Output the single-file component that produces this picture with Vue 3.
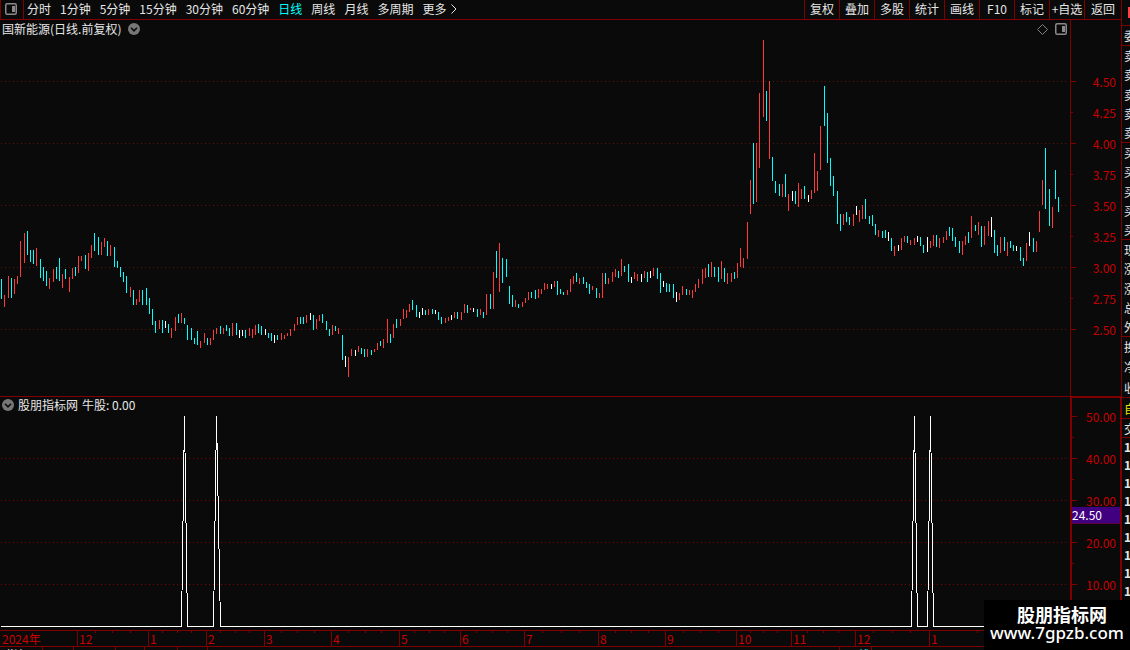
<template>
  <div class="terminal">
    <div class="main">
      <nav class="toolbar">
        <button class="layout-btn" aria-label="布局">
          <svg width="12" height="12" viewBox="0 0 12 12">
            <rect x="0.75" y="0.75" width="10.5" height="10.5" rx="1.5" fill="none" stroke="#8a8a8a" stroke-width="1.5" />
            <rect x="7" y="3" width="3" height="6" fill="#8a8a8a" />
          </svg>
        </button>
        <div class="periods">
          <button
            v-for="p in periods"
            :key="p"
            :class="{ active: p === current }"
            @click="current = p"
          >{{ p }}</button>
          <svg class="more" width="6" height="10" viewBox="0 0 6 10">
            <path d="M0.5 0.5 L5 5 L0.5 9.5" fill="none" stroke="#e6e6e6" />
          </svg>
        </div>
        <div class="actions">
          <button v-for="a in actions" :key="a">{{ a }}</button>
        </div>
      </nav>

      <section class="panel price">
        <div class="plot">
          <svg class="canvas" viewBox="0 20 1070 376" preserveAspectRatio="none" shape-rendering="crispEdges">
            <line v-for="y in priceGrid" :key="y" class="grid" x1="1" x2="1068" :y1="y + 0.5" :y2="y + 0.5" />
            <rect
              v-for="b in bars"
              :key="b[0]"
              :class="b[3]"
              :x="b[0]"
              :y="b[1]"
              width="1"
              :height="b[2] - b[1]"
            />
          </svg>
          <div class="head">
            <span>国新能源(日线.前复权)</span>
            <svg class="fold" width="12" height="12" viewBox="0 0 12 12">
              <circle cx="6" cy="6" r="6" fill="#777" />
              <path d="M3 4.8 L6 7.8 L9 4.8" fill="none" stroke="#0a0a0a" stroke-width="1.6" />
            </svg>
            <svg class="diamond" width="11" height="11" viewBox="0 0 11 11">
              <path d="M5.5 0.5 L10.5 5.5 L5.5 10.5 L0.5 5.5 Z" fill="none" stroke="#808080" />
            </svg>
            <svg width="12" height="12" viewBox="0 0 12 12">
              <rect x="0.75" y="0.75" width="10.5" height="10.5" rx="1.5" fill="none" stroke="#8a8a8a" stroke-width="1.5" />
              <rect x="7" y="3" width="3" height="6" fill="#8a8a8a" />
            </svg>
          </div>
        </div>
        <div class="axis">
          <div v-for="(t, i) in priceTicks" :key="t" class="tick" :class="{ minor: i % 2 }"><span>{{ t }}</span></div>
        </div>
      </section>

      <section class="panel indicator">
        <div class="plot">
          <svg class="canvas" viewBox="0 397 1070 233" preserveAspectRatio="none" shape-rendering="crispEdges">
            <line v-for="y in indicatorGrid" :key="y" class="grid strong" x1="1" x2="1068" :y1="y + 0.5" :y2="y + 0.5" />
            <polyline class="signal" :points="signal" />
          </svg>
          <div class="head">
            <svg class="fold" width="12" height="12" viewBox="0 0 12 12">
              <circle cx="6" cy="6" r="6" fill="#777" />
              <path d="M3 4.8 L6 7.8 L9 4.8" fill="none" stroke="#0a0a0a" stroke-width="1.6" />
            </svg>
            <span>股朋指标网</span>
            <span>牛股: 0.00</span>
          </div>
        </div>
        <div class="axis">
          <div v-for="(t, i) in indicatorTicks" :key="i" class="tick" :class="{ minor: i % 2 }"><span>{{ t }}</span></div>
          <div class="cursor">24.50</div>
        </div>
      </section>

      <div class="dates">
        <span v-for="(m, i) in months" :key="i" :style="{ flexGrow: m[1] }">{{ m[0] }}</span>
      </div>
      <div class="tabs">
        <button v-for="(t, i) in tabs" :key="i" :style="{ flexGrow: t[1] }" :class="{ active: t[0] === '日线' }">{{ t[0] }}</button>
      </div>
    </div>

    <aside class="quote">
      <div class="flag"><i></i></div>
      <div v-for="(g, i) in quoteGroups" :key="i" class="group" :class="g.kind" :style="{ flexGrow: g.size }">
        <span v-for="(c, k) in g.rows" :key="k">{{ c }}</span>
      </div>
    </aside>

    <div class="brand">
      <strong>股朋指标网</strong>
      <span>www.7gpzb.com</span>
    </div>
  </div>
</template>

<script setup>
import { ref } from 'vue'

const periods = ['分时', '1分钟', '5分钟', '15分钟', '30分钟', '60分钟', '日线', '周线', '月线', '多周期', '更多']
const actions = ['复权', '叠加', '多股', '统计', '画线', 'F10', '标记', '+自选', '返回']
const current = ref('日线')

const priceTicks = ['4.50', '4.25', '4.00', '3.75', '3.50', '3.25', '3.00', '2.75', '2.50']
const priceGrid = [81, 143, 205, 267, 329]
const indicatorTicks = ['50.00', '', '40.00', '', '30.00', '', '20.00', '', '10.00']
const indicatorGrid = [458, 500, 542, 584]

// label and width share of each month
const months = [
  ['2024年', 77], ['12', 71], ['1', 58], ['2', 58], ['3', 67], ['4', 68], ['5', 61], ['6', 64],
  ['7', 74], ['8', 67], ['9', 71], ['10', 55], ['11', 64], ['12', 74], ['1', 192]
]
const tabs = [
  ['指标', 43], ['', 31], ['', 42], ['', 29], ['', 33], ['', 30], ['', 632], ['日线', 32], ['', 249]
]

const quoteGroups = [
  { size: 20, rows: ['委'] },
  { size: 97, rows: ['卖', '卖', '卖', '卖', '卖'] },
  { size: 97, rows: ['买', '买', '买', '买', '买'] },
  { size: 97, rows: ['现', '涨', '涨', '总', '外'] },
  { size: 61, rows: ['换', '净', '收'] },
  { size: 21, rows: ['自'], kind: 'own' },
  { size: 19, rows: ['交'] },
  { size: 162, rows: ['1', '1', '1', '1', '1', '1', '1', '1', '1'], kind: 'trades' },
  { size: 50, rows: [], kind: 'rest' }
]

// [left foot, peak, right foot] of each signal
const peaks = [[181, 184, 187], [213, 216, 220], [911, 914, 917], [927, 930, 933]]
const signal = [
  '1,626.5',
  ...peaks.map(([a, b, c]) => `${a + 0.5},626.5 ${b + 0.5},416 ${c + 0.5},626.5`),
  '1059,626.5'
].join(' ')

// x, high, low, colour
const bars = [
  [1, 279, 299, 'c'], [4, 295, 307, 'r'], [8, 276, 298, 'r'], [11, 278, 298, 'c'], [14, 279, 294, 'r'],
  [17, 276, 284, 'r'], [20, 241, 277, 'r'], [24, 233, 263, 'r'], [27, 231, 255, 'c'], [30, 250, 262, 'c'],
  [33, 250, 264, 'c'], [36, 248, 266, 'r'], [40, 259, 278, 'c'], [43, 267, 281, 'c'], [46, 271, 286, 'c'],
  [49, 278, 289, 'r'], [53, 269, 282, 'r'], [56, 267, 279, 'c'], [59, 258, 281, 'c'], [62, 274, 288, 'r'],
  [65, 269, 279, 'c'], [69, 277, 292, 'r'], [72, 268, 279, 'r'], [75, 267, 276, 'c'], [78, 256, 273, 'r'],
  [81, 256, 261, 'r'], [85, 255, 269, 'c'], [88, 253, 271, 'r'], [91, 245, 258, 'r'], [94, 233, 251, 'c'],
  [98, 237, 255, 'c'], [101, 242, 255, 'r'], [104, 238, 247, 'r'], [107, 241, 256, 'c'], [110, 245, 256, 'r'],
  [114, 247, 267, 'c'], [117, 261, 268, 'c'], [120, 267, 277, 'c'], [123, 272, 282, 'c'], [126, 276, 293, 'c'],
  [130, 287, 297, 'r'], [133, 290, 305, 'c'], [136, 299, 305, 'r'], [139, 290, 302, 'r'], [142, 290, 305, 'c'],
  [146, 288, 305, 'c'], [149, 298, 314, 'c'], [152, 309, 325, 'c'], [155, 321, 333, 'c'], [159, 320, 329, 'r'],
  [162, 320, 333, 'c'], [165, 321, 328, 'w'], [168, 324, 333, 'c'], [171, 328, 338, 'r'], [175, 317, 331, 'r'],
  [178, 314, 323, 'c'], [181, 313, 323, 'r'], [184, 318, 324, 'c'], [187, 325, 340, 'c'], [191, 328, 340, 'c'],
  [194, 338, 344, 'c'], [197, 331, 345, 'c'], [200, 341, 348, 'r'], [204, 333, 343, 'r'], [207, 338, 345, 'c'],
  [210, 338, 345, 'r'], [213, 330, 340, 'r'], [216, 328, 334, 'r'], [220, 326, 334, 'c'], [223, 328, 334, 'r'],
  [226, 325, 331, 'c'], [229, 328, 336, 'c'], [232, 323, 336, 'r'], [236, 323, 335, 'c'], [239, 330, 338, 'w'],
  [242, 330, 336, 'w'], [245, 330, 338, 'c'], [249, 328, 336, 'r'], [252, 329, 338, 'r'], [255, 325, 335, 'r'],
  [258, 324, 333, 'c'], [261, 326, 335, 'c'], [265, 329, 335, 'w'], [268, 333, 338, 'c'], [271, 333, 341, 'c'],
  [274, 335, 343, 'w'], [277, 335, 340, 'c'], [281, 333, 340, 'r'], [284, 335, 339, 'r'], [287, 333, 336, 'r'],
  [290, 329, 336, 'r'], [294, 324, 331, 'r'], [297, 317, 325, 'r'], [300, 317, 324, 'c'], [303, 317, 324, 'c'],
  [306, 315, 323, 'r'], [310, 313, 320, 'w'], [313, 315, 330, 'c'], [316, 319, 329, 'r'], [319, 315, 321, 'r'],
  [322, 314, 323, 'c'], [326, 321, 330, 'c'], [329, 329, 336, 'c'], [332, 325, 335, 'r'], [335, 326, 331, 'c'],
  [338, 328, 334, 'r'], [342, 335, 360, 'c'], [345, 356, 367, 'w'], [348, 357, 377, 'r'], [351, 349, 356, 'r'],
  [355, 350, 356, 'w'], [358, 346, 352, 'r'], [361, 348, 354, 'c'], [364, 349, 357, 'c'], [367, 349, 357, 'r'],
  [371, 350, 355, 'c'], [374, 349, 352, 'r'], [377, 343, 350, 'r'], [380, 341, 346, 'c'], [383, 339, 348, 'r'],
  [387, 319, 343, 'r'], [390, 334, 343, 'c'], [393, 324, 338, 'r'], [396, 319, 328, 'c'], [400, 319, 326, 'r'],
  [403, 309, 319, 'r'], [406, 310, 318, 'r'], [409, 304, 312, 'r'], [412, 300, 310, 'c'], [416, 305, 317, 'c'],
  [419, 312, 318, 'w'], [422, 308, 315, 'w'], [425, 310, 315, 'c'], [428, 309, 315, 'r'], [432, 309, 314, 'c'],
  [435, 310, 314, 'w'], [438, 312, 320, 'c'], [441, 317, 324, 'c'], [445, 318, 323, 'r'], [448, 317, 321, 'r'],
  [451, 315, 320, 'w'], [454, 312, 318, 'r'], [457, 312, 319, 'c'], [461, 312, 320, 'r'], [464, 304, 313, 'r'],
  [467, 305, 313, 'c'], [470, 308, 310, 'r'], [473, 308, 312, 'w'], [477, 309, 317, 'c'], [480, 309, 315, 'r'],
  [483, 312, 318, 'c'], [486, 294, 315, 'r'], [490, 294, 309, 'c'], [493, 272, 309, 'r'], [496, 251, 278, 'c'],
  [499, 243, 292, 'r'], [502, 258, 283, 'c'], [506, 259, 277, 'c'], [509, 286, 304, 'c'], [512, 295, 307, 'c'],
  [515, 300, 307, 'r'], [518, 304, 308, 'c'], [522, 302, 307, 'r'], [525, 298, 303, 'r'], [528, 292, 300, 'r'],
  [531, 292, 298, 'c'], [535, 290, 299, 'c'], [538, 289, 298, 'r'], [541, 289, 294, 'r'], [544, 283, 290, 'r'],
  [547, 284, 289, 'r'], [551, 284, 289, 'w'], [554, 281, 287, 'r'], [557, 281, 295, 'c'], [560, 289, 294, 'c'],
  [563, 292, 295, 'c'], [567, 290, 295, 'r'], [570, 279, 292, 'r'], [573, 276, 284, 'r'], [576, 273, 282, 'c'],
  [579, 278, 284, 'r'], [583, 277, 284, 'c'], [586, 282, 288, 'c'], [589, 284, 294, 'c'], [592, 286, 290, 'r'],
  [596, 288, 298, 'c'], [599, 293, 298, 'r'], [602, 273, 298, 'r'], [605, 273, 284, 'c'], [608, 278, 284, 'r'],
  [612, 272, 282, 'r'], [615, 269, 277, 'r'], [618, 271, 278, 'c'], [621, 259, 276, 'r'], [624, 266, 272, 'c'],
  [628, 264, 282, 'c'], [631, 277, 283, 'w'], [634, 272, 279, 'r'], [637, 274, 281, 'r'], [641, 274, 282, 'w'],
  [644, 271, 278, 'r'], [647, 272, 282, 'c'], [650, 271, 278, 'w'], [653, 268, 276, 'r'], [657, 268, 279, 'c'],
  [660, 273, 293, 'c'], [663, 281, 287, 'w'], [666, 283, 292, 'c'], [669, 284, 292, 'c'], [673, 284, 298, 'c'],
  [676, 292, 302, 'w'], [679, 293, 300, 'r'], [682, 286, 295, 'r'], [686, 289, 295, 'c'], [689, 290, 295, 'r'],
  [692, 290, 298, 'r'], [695, 284, 292, 'r'], [698, 279, 288, 'r'], [702, 269, 284, 'r'], [705, 268, 278, 'r'],
  [708, 264, 277, 'c'], [711, 262, 277, 'r'], [714, 267, 277, 'c'], [718, 267, 282, 'c'], [721, 261, 279, 'r'],
  [724, 268, 282, 'c'], [727, 273, 284, 'r'], [731, 273, 282, 'r'], [734, 272, 279, 'c'], [737, 263, 278, 'r'],
  [740, 248, 267, 'r'], [743, 258, 268, 'r'], [747, 222, 259, 'r'], [750, 180, 214, 'r'], [753, 143, 204, 'c'],
  [756, 143, 202, 'r'], [759, 93, 168, 'r'], [763, 40, 117, 'r'], [766, 91, 121, 'c'], [769, 81, 159, 'r'],
  [772, 157, 181, 'c'], [775, 181, 193, 'c'], [779, 184, 196, 'c'], [782, 184, 197, 'r'], [785, 174, 197, 'c'],
  [788, 194, 211, 'r'], [792, 191, 201, 'w'], [795, 191, 204, 'c'], [798, 183, 207, 'r'], [801, 189, 199, 'r'],
  [804, 186, 199, 'c'], [808, 195, 202, 'w'], [811, 190, 199, 'r'], [814, 153, 193, 'r'], [817, 171, 191, 'r'],
  [820, 126, 170, 'r'], [824, 86, 126, 'c'], [827, 113, 163, 'c'], [830, 158, 186, 'c'], [833, 176, 196, 'c'],
  [837, 191, 224, 'c'], [840, 214, 231, 'c'], [843, 214, 225, 'r'], [846, 212, 222, 'c'], [849, 217, 225, 'c'],
  [853, 214, 226, 'r'], [856, 206, 215, 'w'], [859, 210, 222, 'r'], [862, 205, 219, 'r'], [865, 199, 219, 'c'],
  [869, 216, 224, 'c'], [872, 215, 226, 'c'], [875, 224, 235, 'c'], [878, 230, 237, 'r'], [882, 231, 238, 'c'],
  [885, 230, 238, 'c'], [888, 232, 241, 'w'], [891, 238, 251, 'c'], [894, 246, 256, 'r'], [898, 245, 251, 'w'],
  [901, 238, 250, 'r'], [904, 236, 242, 'r'], [907, 236, 243, 'c'], [910, 240, 245, 'r'], [914, 238, 245, 'r'],
  [917, 236, 242, 'w'], [920, 237, 246, 'c'], [923, 245, 253, 'c'], [927, 237, 252, 'w'], [930, 241, 248, 'r'],
  [933, 235, 246, 'r'], [936, 235, 247, 'c'], [939, 238, 248, 'r'], [943, 237, 243, 'r'], [946, 231, 240, 'r'],
  [949, 227, 236, 'c'], [952, 228, 241, 'c'], [955, 237, 247, 'c'], [959, 241, 253, 'c'], [962, 241, 255, 'r'],
  [965, 236, 245, 'r'], [968, 232, 243, 'c'], [971, 216, 238, 'r'], [975, 225, 231, 'c'], [978, 222, 235, 'r'],
  [981, 226, 247, 'c'], [984, 226, 245, 'r'], [988, 221, 236, 'r'], [991, 217, 237, 'w'], [994, 230, 253, 'c'],
  [997, 245, 256, 'c'], [1000, 237, 253, 'r'], [1004, 237, 251, 'c'], [1007, 242, 256, 'r'], [1010, 241, 248, 'c'],
  [1013, 245, 251, 'c'], [1016, 246, 251, 'w'], [1020, 247, 261, 'c'], [1023, 258, 266, 'c'], [1026, 243, 261, 'r'],
  [1029, 232, 246, 'w'], [1033, 238, 252, 'c'], [1036, 241, 252, 'r'], [1039, 211, 232, 'r'], [1042, 180, 205, 'r'],
  [1045, 148, 209, 'c'], [1049, 189, 226, 'c'], [1052, 207, 228, 'r'], [1055, 170, 199, 'c'], [1058, 197, 212, 'c']
]
</script>

<style>
body {
  background: #0a0a0a;
}
</style>

<style scoped>
.terminal {
  --line: #800000;
  --label: #c80000;
  position: relative;
  display: flex;
  height: 100vh;
  overflow: hidden;
  background: #0a0a0a;
  color: #e6e6e6;
  font-family: "Noto Sans CJK SC", "Liberation Sans", sans-serif;
  font-size: 12px;
  line-height: 16px;
}

button {
  margin: 0;
  padding: 0;
  border: 0;
  background: none;
  color: inherit;
  font: inherit;
  white-space: nowrap;
  cursor: pointer;
}

svg {
  display: block;
  flex: none;
}

.main {
  display: flex;
  flex: 1;
  flex-direction: column;
  min-width: 0;
}

/* Toolbar */
.toolbar {
  display: flex;
  flex: none;
  height: 19px;
  border-bottom: 1px solid var(--line);
}

.layout-btn {
  display: flex;
  align-items: center;
  justify-content: center;
  width: 24px;
  padding: 0 2px 2px 0;
  border: solid var(--line);
  border-width: 0 1px;
}

.periods {
  display: flex;
  align-items: center;
  gap: 9px;
  padding: 0 0 2px 3px;
}

.periods .active {
  color: #00ffff;
}

.more {
  margin-left: -4px;
}

.actions {
  display: flex;
  margin-left: auto;
}

.actions button {
  width: 35px;
  padding-bottom: 2px;
  border-left: 1px solid var(--line);
}

.actions button:last-child {
  width: 37px;
}

/* Chart panels */
.panel {
  display: flex;
  min-height: 0;
}

.price {
  flex: 376 1 0;
  border-bottom: 1px solid var(--line);
}

.indicator {
  flex: 233 1 0;
}

.plot {
  position: relative;
  flex: 1;
  min-width: 0;
}

.canvas {
  width: 100%;
  height: 100%;
}

.grid {
  stroke: #5c1010;
  stroke-dasharray: 1 3;
}

.grid.strong {
  stroke: #800000;
}

.r {
  fill: #ff3a3a;
}

.c {
  fill: #00ffff;
}

.w {
  fill: #ffffff;
}

.signal {
  fill: none;
  stroke: #ffffff;
}

.head {
  position: absolute;
  top: 1px;
  right: 3px;
  left: 2px;
  display: flex;
  align-items: center;
  gap: 7px;
}

.indicator .head {
  top: 0;
  gap: 4px;
}

.diamond {
  margin-left: auto;
}

.axis {
  position: relative;
  display: flex;
  flex: 0 0 51px;
  flex-direction: column;
  box-sizing: border-box;
  border-left: 1px solid var(--line);
  color: var(--label);
}

.axis::before {
  flex: 46 1 0;
  content: "";
}

.axis::after {
  flex: 51 1 0;
  content: "";
}

.indicator .axis {
  border: solid var(--line);
  border-width: 1px 1px 0 2px;
}

.indicator .axis::before {
  flex-grow: 8;
}

.indicator .axis::after {
  flex-grow: 35;
}

.tick {
  display: flex;
  flex: 31 1 0;
  align-items: center;
  justify-content: space-between;
  min-height: 0;
  padding-right: 5px;
}

.indicator .tick {
  flex-grow: 21;
  padding-right: 4px;
}

.tick::before {
  width: 5px;
  height: 1px;
  background: var(--line);
  content: "";
}

.tick.minor::before {
  width: 2px;
}

.cursor {
  position: absolute;
  top: 47%;
  right: 0;
  left: 0;
  background: #400080;
  border-bottom: 1px solid #600040;
  color: #ffffff;
  line-height: 16px;
}

/* Date scale */
.dates {
  display: flex;
  flex: none;
  height: 15px;
  border: solid var(--line);
  border-width: 1px 0;
  color: var(--label);
}

.dates span {
  flex: 0 1 0;
  min-width: 0;
  background:
    linear-gradient(var(--line), var(--line)) 0 0 / 1px 100% no-repeat,
    linear-gradient(var(--line), var(--line)) 25% 0 / 1px 2px no-repeat,
    linear-gradient(var(--line), var(--line)) 50% 0 / 1px 2px no-repeat,
    linear-gradient(var(--line), var(--line)) 75% 0 / 1px 2px no-repeat;
  text-indent: 2px;
  white-space: nowrap;
}

.dates span:first-child {
  background: none;
}

.tabs {
  display: flex;
  flex: none;
  height: 3px;
  overflow: hidden;
}

.tabs button {
  flex: 0 1 0;
  min-width: 0;
  height: 16px;
  box-shadow: inset -1px 0 var(--line);
  text-align: left;
  text-indent: 6px;
  line-height: 14px;
}

.tabs .active {
  color: #00ffff;
}

/* Quote column */
.quote {
  display: flex;
  flex: 0 0 9px;
  flex-direction: column;
  box-sizing: border-box;
  border-left: 1px solid var(--line);
  overflow: hidden;
}

.flag {
  display: flex;
  flex: none;
  align-items: center;
  justify-content: flex-end;
  height: 25px;
  border-bottom: 1px solid var(--line);
}

.flag i {
  width: 2px;
  height: 11px;
  background: #ff4040;
}

.group {
  display: flex;
  flex: 0 1 0;
  flex-direction: column;
  min-height: 0;
  box-shadow: inset 0 -1px var(--line);
}

.group span {
  display: flex;
  flex: 1 1 0;
  align-items: center;
  min-height: 0;
  padding-left: 2px;
  white-space: nowrap;
}

.own {
  color: #e6e600;
}

.trades,
.rest {
  box-shadow: none;
}

.trades {
  font-weight: bold;
}

/* Site badge over the corner */
.brand {
  position: absolute;
  right: 0;
  bottom: 0;
  display: flex;
  flex-direction: column;
  align-items: center;
  box-sizing: border-box;
  width: 146px;
  height: 50px;
  padding-top: 5px;
  background: #000;
  color: #fff;
}

.brand strong {
  padding-left: 10px;
  font-size: 18px;
  line-height: 18px;
}

.brand span {
  font-family: "Noto Sans", sans-serif;
  font-size: 17px;
  font-weight: 500;
  line-height: 20px;
}
</style>
